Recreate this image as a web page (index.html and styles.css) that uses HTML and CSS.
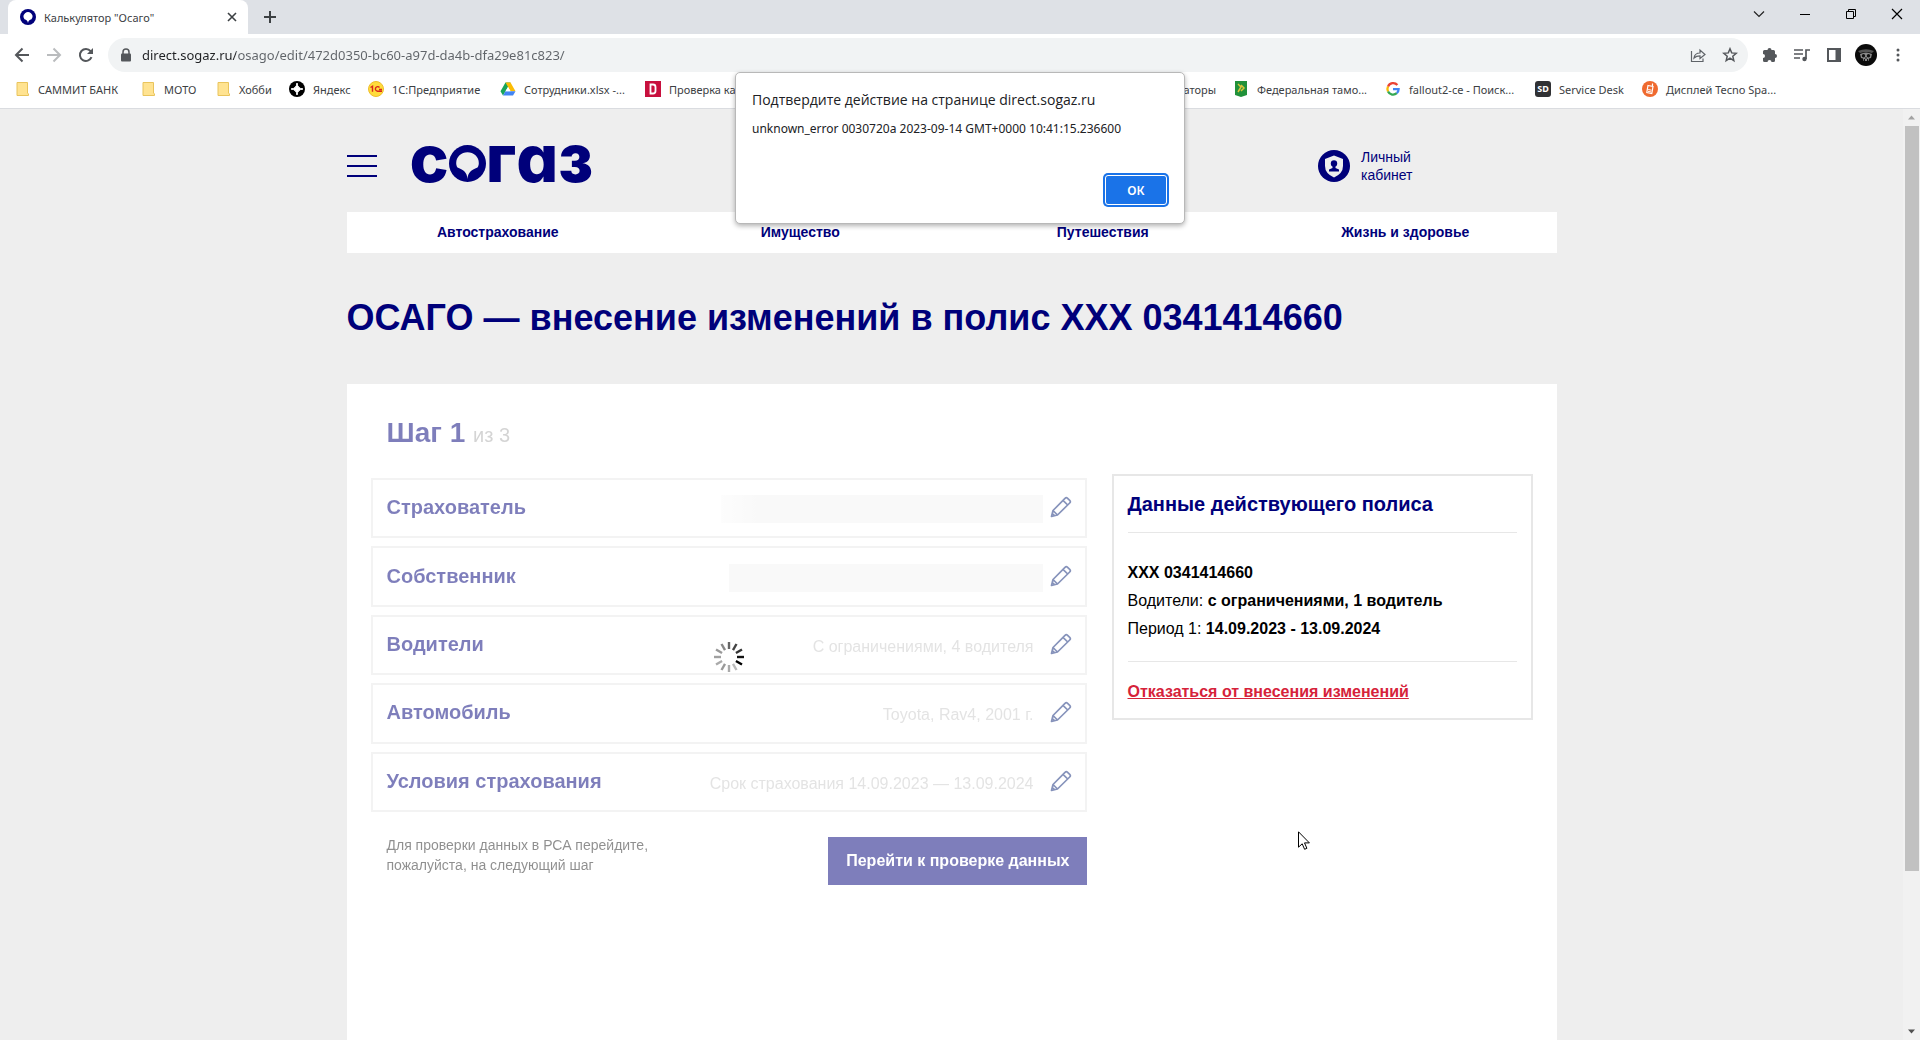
FILE: index.html
```html
<!DOCTYPE html>
<html lang="ru">
<head>
<meta charset="utf-8">
<meta name="viewport" content="width=device-width, initial-scale=1">
<title>Калькулятор "Осаго"</title>
<link rel="stylesheet" href="styles.css">
</head>
<body>
<svg class="sprite" aria-hidden="true">
  <symbol id="pencil" viewBox="0 0 22 22"><path d="M1.500 20.500 3 14.500 15 2.300Q16.300 1 17.600 2.300L19.700 4.400Q21 5.700 19.700 7L7.500 19ZM3 14.500 7.500 19M13 4.300 17.700 9M1.500 20.500 4.500 19.700 2.300 17.500Z" fill="none" stroke="currentColor" stroke-width="1.700" stroke-linejoin="round"/></symbol>
  <symbol id="folder" viewBox="0 0 16 16"><path d="M3 1.500H13.500V12L14.500 13V14.500H3Z" fill="#ffe391" stroke="#e9c45c"/></symbol>
</svg>
<div class="browser">
  <header class="tabstrip">
    <div class="tab">
      <svg width="16" height="16" viewBox="0 0 16 16"><circle cx="8" cy="8" r="8" fill="#00007a"/><path d="M8 14C7.600 11.500 6.500 11 4.500 10.200A4.400 4.400 0 1 1 11.500 10.200C9.500 11 8.400 11.500 8 14Z" fill="#fff"/></svg>
      <span class="tab-title">Калькулятор "Осаго"</span>
      <button class="icon-btn" aria-label="Закрыть вкладку"><svg width="16" height="16" viewBox="0 0 16 16"><path d="M4 4 12 12M12 4 4 12" stroke="#3c4043" stroke-width="1.600"/></svg></button>
    </div>
    <button class="icon-btn new-tab" aria-label="Новая вкладка"><svg width="16" height="16" viewBox="0 0 16 16"><path d="M8 2V14M2 8H14" stroke="#3c4043" stroke-width="2"/></svg></button>
    <div class="window-controls">
      <button class="icon-btn" aria-label="Поиск вкладок"><svg width="12" height="12" viewBox="0 0 12 12"><path d="M1 3.500 6 8.500 11 3.500" fill="none" stroke="#222" stroke-width="1.200"/></svg></button>
      <button class="icon-btn" aria-label="Свернуть"><svg width="12" height="12" viewBox="0 0 12 12"><path d="M1 6.500H11" stroke="#000"/></svg></button>
      <button class="icon-btn" aria-label="Восстановить"><svg width="12" height="12" viewBox="0 0 12 12"><path d="M1.500 3.500H8.500V10.500H1.500ZM3.500 3.500V1.500H10.500V8.500H8.500" fill="none" stroke="#000"/></svg></button>
      <button class="icon-btn" aria-label="Закрыть"><svg width="12" height="12" viewBox="0 0 12 12"><path d="M1 1 11 11M11 1 1 11" stroke="#000" stroke-width="1.200"/></svg></button>
    </div>
  </header>
  <div class="toolbar">
    <div class="nav-buttons">
      <button class="icon-btn" aria-label="Назад"><svg width="16" height="16" viewBox="0 0 16 16"><path d="M15 8H2M8.500 1.500 2 8 8.500 14.500" fill="none" stroke="#54575b" stroke-width="2"/></svg></button>
      <button class="icon-btn" aria-label="Вперёд"><svg width="16" height="16" viewBox="0 0 16 16"><path d="M1 8H14M7.500 1.500 14 8 7.500 14.500" fill="none" stroke="#babcbe" stroke-width="2"/></svg></button>
      <button class="icon-btn" aria-label="Обновить"><svg width="16" height="16" viewBox="0 0 16 16"><path d="M13.500 10.200A6 6 0 1 1 12.600 4.200L14 5.700" fill="none" stroke="#54575b" stroke-width="2"/><path d="M15 1V7H9Z" fill="#54575b"/></svg></button>
    </div>
    <div class="omnibox">
      <svg width="12" height="14" viewBox="0 0 12 14"><path d="M3 6V4A3 3 0 0 1 9 4V6" fill="none" stroke="#54575b" stroke-width="1.500"/><rect x="1" y="5.500" width="10" height="8" rx="1" fill="#54575b"/></svg>
      <input class="url" type="text" aria-label="Адресная строка" value="direct.sogaz.ru/osago/edit/472d0350-bc60-a97d-da4b-dfa29e81c823/">
      <button class="icon-btn" aria-label="Поделиться"><svg width="16" height="16" viewBox="0 0 16 16"><path d="M1.500 4V14.500H13V11.500M4 11C4.500 7.500 7 6 10 6V3L15 7.500 10 11.500V8.800C7.500 8.800 5.500 9.500 4 11Z" fill="none" stroke="#5f6368" stroke-width="1.200"/></svg></button>
      <button class="icon-btn" aria-label="Добавить в закладки"><svg width="16" height="16" viewBox="0 0 16 16"><path d="M8 1.800 9.700 5.900 14.200 6.300 10.800 9.200 11.800 13.600 8 11.200 4.200 13.600 5.200 9.200 1.800 6.300 6.300 5.900Z" fill="none" stroke="#54575b" stroke-width="1.500"/></svg></button>
    </div>
    <div class="actions">
      <button class="icon-btn" aria-label="Расширения"><svg width="16" height="16" viewBox="0 0 16 16"><path d="M1 4.500Q1 3 2.500 3H5.500A2 2 0 1 1 9.500 3H11.500Q13 3 13 4.500V7A2 2 0 1 1 13 11V13.500Q13 15 11.500 15H9.500A2 2 0 1 0 5.500 15H2.500Q1 15 1 13.500V11A2 2 0 1 0 1 7Z" fill="#54575b"/></svg></button>
      <button class="icon-btn" aria-label="Медиа"><svg width="16" height="16" viewBox="0 0 16 16"><path d="M0 3H9M0 7H9M0 11H6M12 12V3H16" fill="none" stroke="#54575b" stroke-width="1.700"/><circle cx="10.500" cy="12" r="2.200" fill="#54575b"/></svg></button>
      <button class="icon-btn" aria-label="Боковая панель"><svg width="16" height="16" viewBox="0 0 16 16"><rect x="2" y="2" width="12" height="12" fill="none" stroke="#54575b" stroke-width="2"/><path d="M9.500 2H14V14H9.500Z" fill="#54575b"/></svg></button>
      <button class="icon-btn" aria-label="Профиль"><svg width="22" height="22" viewBox="0 0 22 22"><circle cx="11" cy="11" r="11" fill="#0b0b0b"/><path d="M3 7Q11 3.500 19 7L17 9Q11 7 5 9Z" fill="#555"/><path d="M5 10Q11 7 17 10L16 14 14 14.500 13.500 17H8.500L8 14.500 6 14Z" fill="#888"/><circle cx="8.500" cy="11.800" r="1.700" fill="#111"/><circle cx="13.500" cy="11.800" r="1.700" fill="#111"/><path d="M11 13V15M9.500 15V17M12.500 15V17" stroke="#111"/></svg></button>
      <button class="icon-btn" aria-label="Меню браузера"><svg width="16" height="16" viewBox="0 0 16 16" fill="#54575b"><circle cx="8" cy="3" r="1.500"/><circle cx="8" cy="8" r="1.500"/><circle cx="8" cy="13" r="1.500"/></svg></button>
    </div>
  </div>
  <nav class="bookmarks" aria-label="Закладки">
    <a href="#"><svg width="16" height="16"><use href="#folder"/></svg>САММИТ БАНК</a>
    <a href="#"><svg width="16" height="16"><use href="#folder"/></svg>МОТО</a>
    <a href="#"><svg width="16" height="16"><use href="#folder"/></svg>Хобби</a>
    <a href="#"><svg width="16" height="16" viewBox="0 0 16 16"><circle cx="8" cy="8" r="8" fill="#000"/><path d="M8 2Q8.500 7.500 14 8 8.500 8.500 8 14 7.500 8.500 2 8 7.500 7.500 8 2Z" fill="#fff" stroke="#fff"/></svg>Яндекс</a>
    <a href="#"><svg width="16" height="16" viewBox="0 0 16 16"><circle cx="8" cy="8" r="7.500" fill="#ffdc3c" stroke="#efbd2b"/><path d="M2.500 6.500 4.500 5.200V10.800M11.500 6.500A2.300 2.300 0 1 0 9.500 10.200H14M11 8.500H14" fill="none" stroke="#d8261c" stroke-width="1.400"/></svg>1С:Предприятие</a>
    <a href="#"><svg width="16" height="16" viewBox="0 0 16 16"><path d="M5.500 1.500H10.500L8 6 3 14.500.5 10.300Z" fill="#19a55a"/><path d="M10.500 1.500 15.500 10.300H10.500L5.500 1.500Z" fill="#fbbc04"/><path d="M5.500 10.300H15.500L13 14.500H3Z" fill="#4285f4"/><path d="M8 6 10.500 10.300H5.500Z" fill="#fff"/></svg>Сотрудники.xlsx -...</a>
    <a href="#"><svg width="16" height="16" viewBox="0 0 16 16"><path d="M0 0H16V16H0Z" fill="#c8103e"/><path d="M5.500 3.500V12.500H8Q10.500 12.500 10.500 10V6Q10.500 3.500 8 3.500Z" fill="none" stroke="#fff" stroke-width="1.800"/></svg>Проверка ка</a>
    <a class="hidden-start" href="#">аторы</a>
    <a href="#"><svg width="16" height="16" viewBox="0 0 16 16"><path d="M2 0H14V14L8 16 2 14Z" fill="#21913a"/><path d="M5 3 8 6 5 11M8 4 11 7 8 10" fill="none" stroke="#d8c33b" stroke-width="1.500"/></svg>Федеральная тамо...</a>
    <a href="#"><svg width="16" height="16" viewBox="0 0 16 16" fill="none" stroke-width="2.300"><path d="M12.400 4A5.600 5.600 0 0 0 3 5.600" stroke="#ea4335"/><path d="M3 5.600A5.600 5.600 0 0 0 3 10.500" stroke="#fbbc05"/><path d="M3 10.500A5.600 5.600 0 0 0 11.800 12.200" stroke="#34a853"/><path d="M11.800 12.200A5.600 5.600 0 0 0 13.600 8.200H8" stroke="#4285f4"/></svg>fallout2-ce - Поиск...</a>
    <a href="#"><span class="sd-icon">SD</span>Service Desk</a>
    <a href="#"><svg width="16" height="16" viewBox="0 0 16 16"><circle cx="8" cy="8" r="8" fill="#ef6a2f"/><path d="M6 4.500 11 5.500 9.800 12.500 4.800 11.500ZM10.500 2.500V5" fill="none" stroke="#fff" stroke-width="1.200"/><path d="M6.200 8.500 9.500 9.200M6 10.300 9.200 11" stroke="#fff"/></svg>Дисплей Tecno Spa...</a>
  </nav>

  <div class="viewport">
    <div class="page">
      <div class="container">
        <header class="site-header">
          <button class="burger" aria-label="Меню"><span></span><span></span><span></span></button>
          <a class="logo" href="#" aria-label="СОГАЗ"><span>с</span><svg width="37" height="37" viewBox="0 0 37 37"><circle cx="18.500" cy="18.500" r="18.500" fill="#00007a"/><path d="M18.500 34C18 27.500 15 25 8.500 22.500 7.500 21 7.200 19.500 7.200 18A11.300 10.800 0 0 1 29.800 18C29.800 19.500 29.500 21 28.500 22.500 22 25 19 27.500 18.500 34Z" fill="#eee"/></svg><span>г</span><span>а</span><span>з</span></a>
          <a class="account" href="#"><svg width="32" height="32" viewBox="0 0 32 32"><circle cx="16" cy="16" r="16" fill="#00007a"/><path d="M16 5.500 25 9V16Q25 23.500 16 27.500 7 23.500 7 16V9Z" fill="#eee"/><circle cx="16" cy="13.500" r="3.200" fill="#00007a"/><path d="M14.500 15H17.500V18L21 19.500V21.500H11V19.500L14.500 18Z" fill="#00007a"/></svg><span>Личный<br>кабинет</span></a>
        </header>
        <nav class="main-nav" aria-label="Разделы">
          <a href="#">Автострахование</a><a href="#">Имущество</a><a href="#">Путешествия</a><a href="#">Жизнь и здоровье</a>
        </nav>
        <h1>ОСАГО — внесение изменений в полис ХХХ 0341414660</h1>
        <main class="card">
          <section class="wizard">
            <div class="wizard-body">
              <h2>Шаг 1 <small>из 3</small></h2>
              <div class="rows">
                <div class="row"><h3>Страхователь</h3><span class="redacted"></span><button class="icon-btn" aria-label="Изменить страхователя"><svg width="22" height="22"><use href="#pencil"/></svg></button></div>
                <div class="row"><h3>Собственник</h3><span class="redacted short"></span><button class="icon-btn" aria-label="Изменить собственника"><svg width="22" height="22"><use href="#pencil"/></svg></button></div>
                <div class="row"><h3>Водители</h3><span class="value">С ограничениями, 4 водителя</span><button class="icon-btn" aria-label="Изменить водителей"><svg width="22" height="22"><use href="#pencil"/></svg></button></div>
                <div class="row"><h3>Автомобиль</h3><span class="value">Toyota, Rav4, 2001 г.</span><button class="icon-btn" aria-label="Изменить автомобиль"><svg width="22" height="22"><use href="#pencil"/></svg></button></div>
                <div class="row"><h3>Условия страхования</h3><span class="value">Срок страхования 14.09.2023 — 13.09.2024</span><button class="icon-btn" aria-label="Изменить условия"><svg width="22" height="22"><use href="#pencil"/></svg></button></div>
              </div>
              <div class="submit">
                <p>Для проверки данных в РСА перейдите,<br>пожалуйста, на следующий шаг</p>
                <button class="primary">Перейти к проверке данных</button>
              </div>
            </div>
            <div class="loading">
              <svg width="32" height="32" viewBox="-16 -16 32 32" stroke-width="2.400">
                <path d="M8 0H15" stroke="#111"/><path d="M8 0H15" stroke="#000" transform="rotate(30)"/><path d="M8 0H15" stroke="#bbb" transform="rotate(60)"/><path d="M8 0H15" stroke="#aaa" transform="rotate(90)"/><path d="M8 0H15" stroke="#999" transform="rotate(120)"/><path d="M8 0H15" stroke="#aaa" transform="rotate(150)"/><path d="M8 0H15" stroke="#a0a0a0" transform="rotate(180)"/><path d="M8 0H15" stroke="#999" transform="rotate(210)"/><path d="M8 0H15" stroke="#888" transform="rotate(240)"/><path d="M8 0H15" stroke="#666" transform="rotate(270)"/><path d="M8 0H15" stroke="#444" transform="rotate(300)"/><path d="M8 0H15" stroke="#333" transform="rotate(330)"/>
              </svg>
            </div>
          </section>
          <aside class="policy">
            <h3>Данные действующего полиса</h3>
            <div class="policy-data">
              <p><b>ХХХ 0341414660</b></p>
              <p>Водители: <b>с ограничениями, 1 водитель</b></p>
              <p>Период 1: <b>14.09.2023 - 13.09.2024</b></p>
            </div>
            <a href="#">Отказаться от внесения изменений</a>
          </aside>
        </main>
      </div>
    </div>
    <div class="scrollbar" aria-hidden="true">
      <svg width="17" height="17" viewBox="0 0 17 17"><path d="M5 10.500 8.500 6.500 12 10.500Z" fill="#a3a3a3"/></svg>
      <div class="track"><div class="thumb"></div></div>
      <svg width="17" height="17" viewBox="0 0 17 17"><path d="M5 6.500 8.500 10.500 12 6.500Z" fill="#505050"/></svg>
    </div>
  </div>

  <div class="dialog" role="dialog" aria-labelledby="dialog-title">
    <h2 id="dialog-title">Подтвердите действие на странице direct.sogaz.ru</h2>
    <p>unknown_error 0030720a 2023-09-14 GMT+0000 10:41:15.236600</p>
    <button>ОК</button>
  </div>
  <svg class="cursor" width="12" height="19" viewBox="0 0 12 19" aria-hidden="true"><path d="M.5.8V16.200L4.200 12.800 6.600 18.300 8.900 17.300 6.500 11.900H11.400Z" fill="#fff" stroke="#000"/></svg>
</div>
</body>
</html>
```
FILE: styles.css
```css
* { box-sizing: border-box; }
body { margin: 0; font-family: "Liberation Sans", Arial, sans-serif; color: #000; }
h1, h2, h3, p { margin: 0; }
button { font: inherit; border: 0; padding: 0; cursor: pointer; }
a { text-decoration: none; color: inherit; }
svg { display: block; flex: none; }
.sprite { position: absolute; width: 0; height: 0; }
.icon-btn { display: flex; align-items: center; justify-content: center; background: none; color: inherit; }

.browser { display: flex; flex-direction: column; height: 100vh; overflow: hidden; position: relative; }

.tabstrip, .toolbar, .bookmarks, .dialog { font-family: "Noto Sans", "Open Sans", sans-serif; }
.tabstrip { display: flex; height: 34px; padding-left: 8px; background: #dee1e6; }
.tab { display: flex; align-items: center; gap: 8px; width: 240px; padding: 0 8px 0 12px; background: #fff; border-radius: 8px 8px 0 0; font-size: 11px; color: #3c4043; }
.tab-title { flex: 1; }
.new-tab { width: 44px; }
.window-controls { display: flex; margin-left: auto; }
.window-controls .icon-btn { width: 46px; height: 28px; }

.toolbar { display: flex; align-items: center; height: 38px; background: #fff; padding-top: 4px; }
.nav-buttons { display: flex; gap: 16px; padding: 0 14px; }
.omnibox { flex: 1; display: flex; align-items: center; height: 34px; padding: 0 2px 0 12px; border-radius: 17px; background: #f1f3f4; }
.url { flex: 1; min-width: 0; margin-left: 10px; padding: 0; border: 0; outline: 0; font: 13px "Noto Sans", "Open Sans", sans-serif; color: transparent; background: linear-gradient(90deg, #202124 94px, #5f6368 94px); -webkit-background-clip: text; background-clip: text; }
.omnibox .icon-btn { width: 32px; }
.actions { display: flex; align-items: center; width: 172px; padding-left: 6px; }
.actions .icon-btn { width: 32px; }

.bookmarks { display: grid; grid-template-columns: 126px 75px 74px 79px 132px 145px 1fr 220px 152px 150px 107px 278px; align-items: center; height: 37px; padding: 0 0 2px 14px; border-bottom: 1px solid #dadce0; background: #fff; font-size: 11px; color: #3c4043; white-space: nowrap; }
.bookmarks a { display: flex; align-items: center; gap: 8px; }
.bookmarks .hidden-start { justify-content: flex-end; padding-right: 17px; }
.sd-icon { width: 16px; height: 16px; border-radius: 3px; background: #303134; color: #fff; font-size: 9px; font-weight: 700; line-height: 16px; text-align: center; }

.viewport { flex: 1; min-height: 0; display: flex; background: #eee; }
.page { flex: 1; min-width: 0; display: flex; flex-direction: column; }
.container { width: 100%; max-width: 1210px; margin: 0 auto; flex: 1; display: flex; flex-direction: column; }
.scrollbar { width: 17px; display: flex; flex-direction: column; background: #f1f1f1; }
.track { flex: 1; padding: 0 1px 0 2px; }
.thumb { height: 83%; background: #c1c1c1; }

.site-header { display: flex; align-items: center; padding: 27px 144px 16px 0; height: 103px; }
.burger { display: flex; flex-direction: column; gap: 8px; width: 30px; margin-right: 33px; background: none; }
.burger span { height: 2px; background: #00007a; width: 100%; }
.logo { display: flex; align-items: baseline; margin-bottom: 12px; font: 800 66px/40px Inter, sans-serif; font-feature-settings: "cv11"; color: #00007a; }
.account { display: flex; align-items: center; gap: 11px; margin-left: auto; font-size: 14px; line-height: 18px; color: #00007a; }

.main-nav { display: grid; grid-template-columns: repeat(4, 1fr); background: #fff; font-size: 14px; font-weight: 700; line-height: 41px; text-align: center; color: #00007a; }
h1 { padding: 45px 0 46px; font-size: 36px; line-height: 40px; color: #00007a; }

.card { flex: 1; display: grid; grid-template-columns: 716px 1fr; gap: 25px; align-items: start; padding: 30px 24px; background: #fff; }
.wizard { position: relative; }
.wizard-body { opacity: .5; }
.wizard h2 { padding: 3px 16px 27px; font-size: 28px; line-height: 32px; color: #00007a; }
.wizard small { font-size: 20px; font-weight: 400; color: #aaa; }
.rows { display: grid; grid-auto-rows: 1fr; gap: 8px; min-height: 334px; }
.row { display: flex; align-items: center; padding: 0 13px 2px 14px; border: 2px solid #e8e8e8; color: #00007a; }
.row h3 { flex: 1; font-size: 20px; line-height: 24px; }
.row .icon-btn { color: #0f2878; }
.value { margin-right: 16px; padding-top: 6px; font-size: 16px; line-height: 20px; color: #c8c8c8; }
.redacted { width: 322px; height: 28px; margin: 4px 7px 0 0; background: linear-gradient(90deg, #fcfcfc, #f4f4f4 40px); }
.redacted.short { width: 314px; background: #f4f4f4; }
.submit { display: flex; justify-content: space-between; align-items: flex-start; padding: 25px 0 15px; }
.submit p { margin-top: -2px; padding-left: 16px; font-size: 14px; line-height: 20px; color: #222; }
.primary { height: 48px; padding: 0 17px 0 18px; background: #00007a; color: #fff; font-size: 16px; font-weight: 700; }
.loading { position: absolute; inset: 0; display: flex; align-items: center; justify-content: center; }

.policy { margin-top: 60px; padding: 14px 14px 12px; border: 2px solid #e7e7e7; font-size: 16px; line-height: 28px; }
.policy h3 { padding-bottom: 14px; font-size: 20px; line-height: 28px; color: #00007a; }
.policy-data { padding: 26px 0 18px; border: solid #e7e7e7; border-width: 1px 0; }
.policy a { display: inline-block; margin-top: 16px; font-weight: 700; color: #d6223a; text-decoration: underline; }

.dialog { position: absolute; top: 72px; left: 50%; width: 450px; margin-left: -225px; display: flex; flex-direction: column; padding: 15px 15px 16px 16px; border: 1px solid #b8b8b8; border-radius: 5px; background: #fff; box-shadow: 0 2px 5px rgba(0, 0, 0, .3); color: #202124; }
.dialog h2 { font: 400 14px/24px "Open Sans", "Noto Sans", sans-serif; }
.dialog p { padding: 7px 0 34px; font-size: 12px; line-height: 20px; }
.dialog button { align-self: flex-end; width: 62px; height: 30px; margin: 2px; border-radius: 3px; border: 1px solid #fff; background: #1a73e8; color: #fff; font-size: 12px; font-weight: 600; box-shadow: 0 0 0 2px #1a73e8; }

.cursor { position: absolute; left: 1298px; top: 831px; }
```
